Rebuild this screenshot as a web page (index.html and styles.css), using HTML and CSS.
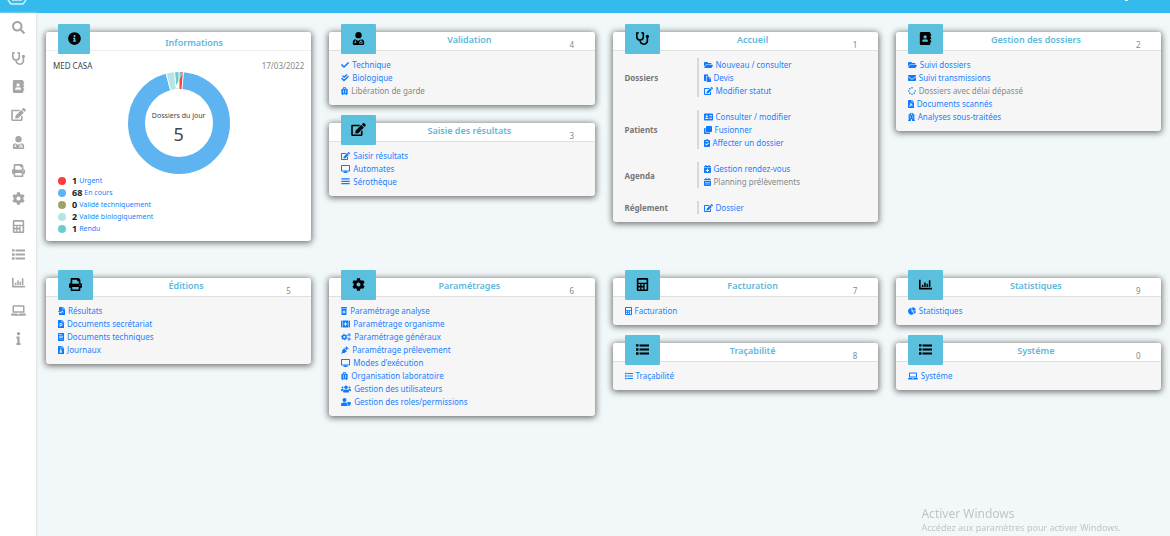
FILE: index.html
```html
<!DOCTYPE html>
<html lang="fr">
<head>
<meta charset="utf-8">
<title>MED CASA</title>
<link rel="stylesheet" href="styles.css">
</head>
<body>
<svg class="sprite" aria-hidden="true">
  <symbol id="search" viewBox="0 0 512 512"><path d="M505 442.7L405.3 343c-4.5-4.5-10.6-7-17-7H372c27.6-35.3 44-79.7 44-128C416 93.1 322.9 0 208 0S0 93.1 0 208s93.1 208 208 208c48.3 0 92.7-16.4 128-44v16.3c0 6.4 2.5 12.5 7 17l99.7 99.7c9.4 9.4 24.6 9.4 33.9 0l28.3-28.3c9.4-9.4 9.4-24.6.1-34zM208 336c-70.7 0-128-57.2-128-128 0-70.7 57.2-128 128-128 70.7 0 128 57.2 128 128 0 70.7-57.2 128-128 128z"/></symbol>
  <symbol id="stethoscope" viewBox="0 0 512 512"><path d="M447.1 112c-34.2.5-62.3 28.4-63 62.6-.5 24.3 12.5 45.6 32 56.8V344c0 57.3-50.2 104-112 104-60 0-109.2-44.1-111.9-99.2C265 333.8 320 269.2 320 192V36.6c0-11.4-8.1-21.3-19.3-23.5L237.8.5c-13-2.6-25.6 5.8-28.2 18.8L206.4 35c-2.6 13 5.8 25.6 18.8 28.2l30.7 6.1v121.4c0 52.9-42.2 96.7-95.1 97.2-53.4.5-96.9-42.7-96.9-96V69.4l30.7-6.1c13-2.6 21.4-15.2 18.8-28.2l-3.1-15.7C107.7 6.4 95.1-2 82.1.6L19.3 13C8.1 15.3 0 25.1 0 36.6V192c0 77.3 55.1 142 128.1 156.8C130.7 439.2 208.6 512 304 512c97 0 176-75.4 176-168V231.4c19.1-11.1 32-31.7 32-55.4 0-35.7-29.2-64.5-64.9-64z"/></symbol>
  <symbol id="book" viewBox="0 0 448 512"><path fill-rule="evenodd" d="M48 0h320q48 0 48 48v32h20q12 0 12 12v40q0 12-12 12h-20v64h20q12 0 12 12v40q0 12-12 12h-20v64h20q12 0 12 12v40q0 12-12 12h-20v64q0 48-48 48H48q-48 0-48-48V48Q0 0 48 0zM208 128a64 64 0 1 0 0 128a64 64 0 1 0 0-128zM96 384h224v-32q0-66-67-66-20 10-45 10t-45-10q-67 0-67 66z"/></symbol>
  <symbol id="edit" viewBox="0 0 576 512"><path d="M402.6 83.2l90.2 90.2c3.8 3.8 3.8 10 0 13.8L274.4 405.6l-92.8 10.3c-12.4 1.4-22.9-9.1-21.5-21.5l10.3-92.8L388.8 83.2c3.8-3.8 10-3.8 13.8 0zm162-22.9l-48.8-48.8c-15.2-15.2-39.9-15.2-55.2 0l-35.4 35.4c-3.8 3.8-3.8 10 0 13.8l90.2 90.2c3.8 3.8 10 3.8 13.8 0l35.4-35.4c15.2-15.3 15.2-40 0-55.2zM384 346.2V448H64V128h229.8c3.2 0 6.2-1.3 8.5-3.5l40-40c7.6-7.6 2.2-20.5-8.5-20.5H48C21.5 64 0 85.5 0 112v352c0 26.5 21.5 48 48 48h352c26.5 0 48-21.5 48-48V306.2c0-10.7-12.9-16-20.5-8.5l-40 40c-2.2 2.3-3.5 5.3-3.5 8.5z"/></symbol>
  <symbol id="doctor" viewBox="0 0 448 512"><circle cx="224" cy="125" r="125"/><path fill-rule="evenodd" d="M112 290q-112 14-112 130v44q0 48 48 48h352q48 0 48-48v-44q0-116-112-130v65q48 10 48 60v40q0 12-12 12h-40v-32h14v-22q0-28-26-28t-26 28v22h14v32h-40q-12 0-12-12v-40q0-50 48-60v-65l-80 50h-32l-80-50v80a38 38 0 1 1-32 0zM128 387a20 20 0 1 0 0 40a20 20 0 1 0 0-40z"/></symbol>
  <symbol id="print" viewBox="0 0 512 512"><path d="M448 192V77.25c0-8.49-3.37-16.62-9.37-22.63L393.37 9.37c-6-6-14.14-9.37-22.63-9.37H96C78.33 0 64 14.33 64 32v160c-35.35 0-64 28.65-64 64v112c0 8.84 7.16 16 16 16h48v96c0 17.67 14.33 32 32 32h320c17.67 0 32-14.33 32-32v-96h48c8.84 0 16-7.16 16-16V256c0-35.35-28.65-64-64-64zm-64 256H128v-96h256v96zm0-224H128V64h192v48c0 8.84 7.16 16 16 16h48v96zm48 72c-13.25 0-24-10.75-24-24 0-13.26 10.75-24 24-24s24 10.74 24 24c0 13.25-10.75 24-24 24z"/></symbol>
  <symbol id="cog" viewBox="0 0 512 512"><path d="M487.4 315.7l-42.6-24.6c4.3-23.2 4.3-47 0-70.2l42.6-24.6c4.9-2.8 7.1-8.6 5.5-14-11.1-35.6-30-67.8-54.7-94.6-3.8-4.1-10-5.1-14.8-2.3L380.8 110c-17.9-15.4-38.5-27.3-60.8-35.1V25.8c0-5.6-3.9-10.5-9.4-11.7-36.7-8.2-74.3-7.8-109.2 0-5.5 1.2-9.4 6.1-9.4 11.7V75c-22.2 7.9-42.8 19.8-60.8 35.1L88.7 85.5c-4.9-2.8-11-1.9-14.8 2.3-24.7 26.7-43.6 58.9-54.7 94.6-1.7 5.4.6 11.2 5.5 14L67.3 221c-4.3 23.2-4.3 47 0 70.2l-42.6 24.6c-4.9 2.8-7.1 8.6-5.5 14 11.1 35.6 30 67.8 54.7 94.6 3.8 4.1 10 5.1 14.8 2.3l42.6-24.6c17.9 15.4 38.5 27.3 60.8 35.1v49.2c0 5.6 3.9 10.5 9.4 11.7 36.7 8.2 74.3 7.8 109.2 0 5.5-1.2 9.4-6.1 9.4-11.7v-49.2c22.2-7.9 42.8-19.8 60.8-35.1l42.6 24.6c4.9 2.8 11 1.9 14.8-2.3 24.7-26.7 43.6-58.9 54.7-94.6 1.5-5.5-.7-11.3-5.6-14.1zM256 336c-44.1 0-80-35.9-80-80s35.9-80 80-80 80 35.9 80 80-35.9 80-80 80z"/></symbol>
  <symbol id="calc" viewBox="0 0 448 512"><path fill-rule="evenodd" d="M48 0h352q48 0 48 48v416q0 48-48 48H48q-48 0-48-48V48Q0 0 48 0zM64 64v120h320V64zM64 240v64h70v-64zM186 240v64h70v-64zM308 240v208h76V240zM64 372v76h70v-76zM186 372v76h70v-76z"/></symbol>
  <symbol id="list" viewBox="0 0 512 512"><path d="M0 46h100v96H0zM0 206h100v96H0zM0 366h100v96H0zM140 58h372v76H140zM140 218h372v76H140zM140 378h372v76H140z"/></symbol>
  <symbol id="chart" viewBox="0 0 512 512"><path d="M0 64h64v320h448v64H24q-24 0-24-24zM112 262h62v90h-62zM204 182h62v170h-62zM296 222h62v130h-62zM388 92h62v260h-62z"/></symbol>
  <symbol id="laptop" viewBox="0 0 640 512"><path fill-rule="evenodd" d="M112 32h416q48 0 48 48v272H64V80q0-48 48-48zM128 96v192h384V96zM0 384h260q4 32 34 32h52q30 0 34-32h260v32q0 64-64 64H64q-64 0-64-64z"/></symbol>
  <symbol id="info" viewBox="0 0 192 512"><circle cx="96" cy="66" r="66"/><path d="M12 180h128v252h40v80H12v-80h36V260H12z"/></symbol>
  <symbol id="infocircle" viewBox="0 0 512 512"><path d="M256 8C119 8 8 119 8 256s111 248 248 248 248-111 248-248S393 8 256 8zm0 110c23.2 0 42 18.8 42 42s-18.8 42-42 42-42-18.8-42-42 18.8-42 42-42zm56 254c0 6.600-5.400 12-12 12h-88c-6.600 0-12-5.400-12-12v-24c0-6.600 5.400-12 12-12h12v-64h-12c-6.600 0-12-5.400-12-12v-24c0-6.600 5.400-12 12-12h64c6.600 0 12 5.400 12 12v100h12c6.600 0 12 5.400 12 12v24z"/></symbol>
  <symbol id="check" viewBox="0 0 512 512"><path d="M173.9 439.4l-166.4-166.4c-10-10-10-26.2 0-36.2l36.2-36.2c10-10 26.2-10 36.2 0L192 312.7 432.1 72.6c10-10 26.2-10 36.2 0l36.2 36.2c10 10 10 26.2 0 36.2l-294.4 294.4c-10 10-26.2 10-36.2 0z"/></symbol>
  <symbol id="checks" viewBox="0 0 512 512"><path fill="none" stroke="currentColor" stroke-width="92" d="M100 110l100 90L380 40M30 260l160 160L480 150"/></symbol>
  <symbol id="luggage" viewBox="0 0 400 512"><path fill-rule="evenodd" d="M110 110V40q0-40 40-40h100q40 0 40 40v70h60q50 0 50 50v270q0 40-40 40v42h-70v-42H110v42H40v-42q-40 0-40-40V160q0-50 50-50zM160 110h80V50h-80zM100 180v220h44V180zM256 180v220h44V180z"/></symbol>
  <symbol id="desktop" viewBox="0 0 576 512"><path fill-rule="evenodd" d="M48 0h480q48 0 48 48v320q0 48-48 48H350l16 48h56v48H154v-48h56l16-48H48q-48 0-48-48V48Q0 0 48 0zM64 64v284h448V64z"/></symbol>
  <symbol id="bars" viewBox="0 0 576 512"><path d="M20 20h536v80H20zM20 170h536v80H20zM20 320h536v80H20z"/></symbol>
  <symbol id="folder" viewBox="0 0 576 512"><path d="M572.694 292.093L500.27 416.248A63.997 63.997 0 0 1 444.989 448H45.025c-18.523 0-30.064-20.093-20.731-36.093l72.424-124.155A64 64 0 0 1 152 256h399.964c18.523 0 30.064 20.093 20.73 36.093zM152 224h328v-48c0-26.51-21.49-48-48-48H272l-64-64H48C21.49 64 0 85.49 0 112v278.046l69.077-118.418C86.214 242.25 117.989 224 152 224z"/></symbol>
  <symbol id="paste" viewBox="0 0 448 512"><path d="M0 30h100q28-50 56 0h100v90H130v320H0zM170 160h150v120h128v232H170zM350 160l98 90h-98z"/></symbol>
  <symbol id="idcard" viewBox="0 0 576 512"><path fill-rule="evenodd" d="M48 32h480q48 0 48 48v352q0 48-48 48H48q-48 0-48-48V80q0-48 48-48zM176 140a66 66 0 1 0 0 132a66 66 0 1 0 0-132zM64 390h224q0-90-70-90h-84q-70 0-70 90zM350 150v44h162v-44zM350 234v44h162v-44zM350 318v44h162v-44z"/></symbol>
  <symbol id="clone" viewBox="0 0 512 512"><path d="M176 0h288q48 0 48 48v288q0 48-48 48H176q-48 0-48-48V48q0-48 48-48zM96 120v296h296v48q0 48-48 48H48q-48 0-48-48V168q0-48 48-48z"/></symbol>
  <symbol id="clipcheck" viewBox="0 0 384 512"><path fill-rule="evenodd" d="M48 64h80q10-64 64-64t64 64h80q48 0 48 48v352q0 48-48 48H48q-48 0-48-48V112q0-48 48-48zM110 130v40h164v-40zM70 320l100 100 150-150-42-42-108 108-58-58z"/></symbol>
  <symbol id="calplus" viewBox="0 0 448 512"><path fill-rule="evenodd" d="M0 160V112q0-48 48-48h48V0h76v64h104V0h76v64h48q48 0 48 48v48zM0 192h448v272q0 48-48 48H48q-48 0-48-48zM192 240v72h-72v64h72v72h64v-72h72v-64h-72v-72z"/></symbol>
  <symbol id="calendar" viewBox="0 0 448 512"><path fill-rule="evenodd" d="M0 150V112q0-48 48-48h48V0h76v64h104V0h76v64h48q48 0 48 48v38zM0 192h448v272q0 48-48 48H48q-48 0-48-48zM64 260v34h320v-34zM64 370v34h320v-34z"/></symbol>
  <symbol id="mail" viewBox="0 0 512 512"><path d="M48 64h416q48 0 48 48v26L256 320 0 138v-26q0-48 48-48zM0 190l256 182 256-182v210q0 48-48 48H48q-48 0-48-48z"/></symbol>
  <symbol id="spinner" viewBox="0 0 512 512"><circle cx="256" cy="52" r="52"/><circle cx="111" cy="111" r="52"/><circle cx="52" cy="256" r="52"/><circle cx="111" cy="401" r="52"/><circle cx="256" cy="460" r="52"/><circle cx="401" cy="401" r="52"/><circle cx="460" cy="256" r="52"/></symbol>
  <symbol id="pdf" viewBox="0 0 384 512"><path fill-rule="evenodd" d="M24 0h210v150h150v338q0 24-24 24H24q-24 0-24-24V24Q0 0 24 0zM266 0l118 118H266zM160 190q10 120-90 230l36 20q50-90 180-80l30-40q-90 0-110-130z"/></symbol>
  <symbol id="hospital" viewBox="0 0 448 512"><path fill-rule="evenodd" d="M120 80V0h208v80h80v390h40v42H260V400h-72v112H0v-42h40V80zM204 30v30h-30v36h30v30h40V96h30V60h-30V30zM110 180v50h70v-50zM268 180v50h70v-50zM110 290v50h70v-50zM268 290v50h70v-50z"/></symbol>
  <symbol id="filewave" viewBox="0 0 448 512"><path fill-rule="evenodd" d="M88 0h210v150h150v338q0 24-24 24H88q-24 0-24-24V350h80l50 80 76-150 30 70h60v-44h-34l-56-100-76 150-30-50H0v-56h64V24Q64 0 88 0zM330 0l118 118H330z"/></symbol>
  <symbol id="file" viewBox="0 0 384 512"><path fill-rule="evenodd" d="M24 0h210v150h150v338q0 24-24 24H24q-24 0-24-24V24Q0 0 24 0zM266 0l118 118H266zM100 210v220h54v-70h60q76 0 76-75t-76-75zM154 256h50q30 0 30 30t-30 30h-50z"/></symbol>
  <symbol id="filetext" viewBox="0 0 384 512"><path fill-rule="evenodd" d="M24 0h336q24 0 24 24v464q0 24-24 24H24q-24 0-24-24V24Q0 0 24 0zM80 80v44h140V80zM80 180v120h224V180zM120 220h144v40H120zM80 360v36h110v-36zM230 400v36h90v-36z"/></symbol>
  <symbol id="filezip" viewBox="0 0 384 512"><path fill-rule="evenodd" d="M24 0h210v150h150v338q0 24-24 24H24q-24 0-24-24V24Q0 0 24 0zM266 0l118 118H266zM110 50v46h50V50zM150 120v46h50v-46zM150 210l-50 170q0 70 75 70t75-70l-50-170zM175 350a30 26 0 1 1 0 52a30 26 0 1 1 0-52z"/></symbol>
  <symbol id="bottle" viewBox="0 0 384 512"><path fill-rule="evenodd" d="M24 0h336q24 0 24 24v72H0V24Q0 0 24 0zM32 128h320v336q0 48-48 48H80q-48 0-48-48zM160 220v64H96v64h64v64h64v-64h64v-64h-64v-64z"/></symbol>
  <symbol id="kit" viewBox="0 0 576 512"><path fill-rule="evenodd" d="M0 80q0-48 48-48h32v448H48q-48 0-48-48zM112 32h352v448H112zM496 32h32q48 0 48 48v352q0 48-48 48h-32zM256 140v84h-84v64h84v84h64v-84h84v-64h-84v-84z"/></symbol>
  <symbol id="cogs" viewBox="0 0 640 512"><g fill="none" stroke="currentColor"><circle cx="210" cy="256" r="116" stroke-width="96"/><circle cx="210" cy="256" r="180" stroke-width="54" stroke-dasharray="94 94"/><circle cx="515" cy="120" r="56" stroke-width="54"/><circle cx="515" cy="120" r="92" stroke-width="38" stroke-dasharray="48 48"/><circle cx="515" cy="392" r="56" stroke-width="54"/><circle cx="515" cy="392" r="92" stroke-width="38" stroke-dasharray="48 48"/></g></symbol>
  <symbol id="syringe" viewBox="0 0 512 512"><path d="M350 20l142 142-40 40-40-40-34 34 40 40-40 40L220 118l40-40 50 46 40-36-40-28zM200 150l180 180-160 110-100 0-70 62-40-40 62-70V290z"/></symbol>
  <symbol id="users" viewBox="0 0 640 512"><circle cx="96" cy="160" r="64"/><circle cx="544" cy="160" r="64"/><circle cx="320" cy="144" r="112"/><path d="M64 256h64q30 0 46 20-56 32-64 108H0v-64q0-64 64-64zM576 256h-64q-30 0-46 20 56 32 64 108h110v-64q0-64-64-64zM243 288h154q115 0 115 115v29q0 48-48 48H176q-48 0-48-48v-29q0-115 115-115z"/></symbol>
  <symbol id="usershield" viewBox="0 0 640 512"><circle cx="224" cy="128" r="128"/><path d="M134 288h180q30 0 60 14v90q0 70 80 120H48q-48 0-48-48v-42q0-134 134-134zM510 240l130 52q0 160-130 220-120-60-120-220z"/></symbol>
  <symbol id="pie" viewBox="0 0 544 512"><path d="M240 40v240l165 165A236 236 0 1 1 240 40zM288 0a236 236 0 0 1 240 224H288zM304 270h236q-6 96-70 166z"/></symbol>
</svg>

<header class="topbar">
  <svg class="logo" viewBox="0 0 20 5" aria-hidden="true"><path d="M1 0l3 4h12l3-4M5 0h10" fill="none" stroke="#d6f1fb" stroke-width="1.500"/></svg>
  <span class="caret"></span>
</header>

<div class="shell">
  <nav class="sidebar" aria-label="Menu">
    <a href="#" aria-label="Recherche"><svg><use href="#search"/></svg></a>
    <a href="#" aria-label="Accueil"><svg><use href="#stethoscope"/></svg></a>
    <a href="#" aria-label="Gestion des dossiers"><svg><use href="#book"/></svg></a>
    <a href="#" aria-label="Saisie des résultats"><svg class="wide"><use href="#edit"/></svg></a>
    <a href="#" aria-label="Validation"><svg><use href="#doctor"/></svg></a>
    <a href="#" aria-label="Éditions"><svg><use href="#print"/></svg></a>
    <a href="#" aria-label="Paramétrages"><svg><use href="#cog"/></svg></a>
    <a href="#" aria-label="Facturation"><svg><use href="#calc"/></svg></a>
    <a href="#" aria-label="Traçabilité"><svg><use href="#list"/></svg></a>
    <a href="#" aria-label="Statistiques"><svg><use href="#chart"/></svg></a>
    <a href="#" aria-label="Système"><svg class="wide"><use href="#laptop"/></svg></a>
    <a href="#" aria-label="Informations"><svg><use href="#info"/></svg></a>
  </nav>

  <main class="board">
    <div class="stack">
      <section class="card info">
        <div class="head"><span class="tile"><svg><use href="#infocircle"/></svg></span><h2>Informations</h2></div>
        <div class="summary">
          <div class="meta"><span>MED CASA</span><time>17/03/2022</time></div>
          <div class="chart">
            <svg viewBox="-51 -51 102 102" role="img" aria-label="Répartition des dossiers">
              <g fill="none" stroke-width="17" transform="rotate(-90)">
                <circle r="42.5" pathLength="72" stroke="#ff3b3b" stroke-dasharray="1 71"/>
                <circle r="42.5" pathLength="72" stroke="#5eb4f0" stroke-dasharray="68 4" stroke-dashoffset="-1"/>
                <circle r="42.5" pathLength="72" stroke="#b5e6e4" stroke-dasharray="2 70" stroke-dashoffset="-69"/>
                <circle r="42.5" pathLength="72" stroke="#6ecbcb" stroke-dasharray="1 71" stroke-dashoffset="-71"/>
              </g>
              <path d="M0-33V-52M2.900-33L4.500-52M-8.500-33L-13.400-52M-2.900-33L-4.500-52" stroke="#fff"/>
            </svg>
            <div class="total"><span>Dossiers du jour</span><strong>5</strong></div>
          </div>
          <ul class="legend">
            <li><i class="dot red"></i><b>1</b> <a href="#">Urgent</a></li>
            <li><i class="dot blue"></i><b>68</b> <a href="#">En cours</a></li>
            <li><i class="dot olive"></i><b>0</b> <a href="#">Validé techniquement</a></li>
            <li><i class="dot pale"></i><b>2</b> <a href="#">Validé biologiquement</a></li>
            <li><i class="dot teal"></i><b>1</b> <a href="#">Rendu</a></li>
          </ul>
        </div>
      </section>
    </div>

    <div class="stack">
      <section class="card">
        <div class="head"><span class="tile"><svg><use href="#doctor"/></svg></span><h2>Validation</h2><span class="num">4</span></div>
        <ul class="links">
          <li><a href="#"><svg class="w8"><use href="#check"/></svg>Technique</a></li>
          <li><a href="#"><svg class="w8"><use href="#checks"/></svg>Biologique</a></li>
          <li><a href="#" class="off"><svg class="w7"><use href="#luggage"/></svg>Libération de garde</a></li>
        </ul>
      </section>
      <section class="card">
        <div class="head"><span class="tile"><svg class="wide"><use href="#edit"/></svg></span><h2>Saisie des résultats</h2><span class="num">3</span></div>
        <ul class="links">
          <li><a href="#"><svg class="w9"><use href="#edit"/></svg>Saisir résultats</a></li>
          <li><a href="#"><svg class="w9"><use href="#desktop"/></svg>Automates</a></li>
          <li><a href="#"><svg class="w9"><use href="#bars"/></svg>Sérothèque</a></li>
        </ul>
      </section>
    </div>

    <div class="stack">
      <section class="card">
        <div class="head"><span class="tile"><svg><use href="#stethoscope"/></svg></span><h2>Accueil</h2><span class="num">1</span></div>
        <div class="groups">
          <h3>Dossiers</h3>
          <ul>
            <li><a href="#"><svg class="w9"><use href="#folder"/></svg>Nouveau / consulter</a></li>
            <li><a href="#"><svg class="w7"><use href="#paste"/></svg>Devis</a></li>
            <li><a href="#"><svg class="w9"><use href="#edit"/></svg>Modifier statut</a></li>
          </ul>
          <h3>Patients</h3>
          <ul>
            <li><a href="#"><svg class="w9"><use href="#idcard"/></svg>Consulter / modifier</a></li>
            <li><a href="#"><svg class="w8"><use href="#clone"/></svg>Fusionner</a></li>
            <li><a href="#"><svg class="w6"><use href="#clipcheck"/></svg>Affecter un dossier</a></li>
          </ul>
          <h3>Agenda</h3>
          <ul>
            <li><a href="#"><svg class="w7"><use href="#calplus"/></svg>Gestion rendez-vous</a></li>
            <li><a href="#" class="off"><svg class="w7"><use href="#calendar"/></svg>Planning prélèvements</a></li>
          </ul>
          <h3>Réglement</h3>
          <ul>
            <li><a href="#"><svg class="w9"><use href="#edit"/></svg>Dossier</a></li>
          </ul>
        </div>
      </section>
    </div>

    <div class="stack">
      <section class="card">
        <div class="head"><span class="tile"><svg><use href="#book"/></svg></span><h2>Gestion des dossiers</h2><span class="num">2</span></div>
        <ul class="links">
          <li><a href="#"><svg class="w9"><use href="#folder"/></svg>Suivi dossiers</a></li>
          <li><a href="#"><svg class="w8"><use href="#mail"/></svg>Suivi transmissions</a></li>
          <li><a href="#" class="off"><svg class="w8"><use href="#spinner"/></svg>Dossiers avec délai dépassé</a></li>
          <li><a href="#"><svg class="w6"><use href="#pdf"/></svg>Documents scannés</a></li>
          <li><a href="#"><svg class="w7"><use href="#hospital"/></svg>Analyses sous-traitées</a></li>
        </ul>
      </section>
    </div>

    <div class="stack">
      <section class="card">
        <div class="head"><span class="tile"><svg><use href="#print"/></svg></span><h2>Éditions</h2><span class="num">5</span></div>
        <ul class="links">
          <li><a href="#"><svg class="w7"><use href="#filewave"/></svg>Résultats</a></li>
          <li><a href="#"><svg class="w6"><use href="#file"/></svg>Documents secrétariat</a></li>
          <li><a href="#"><svg class="w6"><use href="#filetext"/></svg>Documents techniques</a></li>
          <li><a href="#"><svg class="w6"><use href="#filezip"/></svg>Journaux</a></li>
        </ul>
      </section>
    </div>

    <div class="stack">
      <section class="card">
        <div class="head"><span class="tile"><svg><use href="#cog"/></svg></span><h2>Paramétrages</h2><span class="num">6</span></div>
        <ul class="links">
          <li><a href="#"><svg class="w6"><use href="#bottle"/></svg>Paramétrage analyse</a></li>
          <li><a href="#"><svg class="w9"><use href="#kit"/></svg>Paramétrage organisme</a></li>
          <li><a href="#"><svg class="w10"><use href="#cogs"/></svg>Paramétrage généraux</a></li>
          <li><a href="#"><svg class="w8"><use href="#syringe"/></svg>Paramétrage prélevement</a></li>
          <li><a href="#"><svg class="w9"><use href="#desktop"/></svg>Modes d'exécution</a></li>
          <li><a href="#"><svg class="w7"><use href="#luggage"/></svg>Organisation laboratoire</a></li>
          <li><a href="#"><svg class="w10"><use href="#users"/></svg>Gestion des utilisateurs</a></li>
          <li><a href="#"><svg class="w10"><use href="#usershield"/></svg>Gestion des roles/permissions</a></li>
        </ul>
      </section>
    </div>

    <div class="stack">
      <section class="card">
        <div class="head"><span class="tile"><svg><use href="#calc"/></svg></span><h2>Facturation</h2><span class="num">7</span></div>
        <ul class="links"><li><a href="#"><svg class="w7"><use href="#calc"/></svg>Facturation</a></li></ul>
      </section>
      <section class="card">
        <div class="head"><span class="tile"><svg><use href="#list"/></svg></span><h2>Traçabilité</h2><span class="num">8</span></div>
        <ul class="links"><li><a href="#"><svg class="w8"><use href="#list"/></svg>Traçabilité</a></li></ul>
      </section>
    </div>

    <div class="stack">
      <section class="card">
        <div class="head"><span class="tile"><svg><use href="#chart"/></svg></span><h2>Statistiques</h2><span class="num">9</span></div>
        <ul class="links"><li><a href="#"><svg class="w8"><use href="#pie"/></svg>Statistiques</a></li></ul>
      </section>
      <section class="card">
        <div class="head"><span class="tile"><svg><use href="#list"/></svg></span><h2>Systéme</h2><span class="num">0</span></div>
        <ul class="links"><li><a href="#"><svg class="w10"><use href="#laptop"/></svg>Systéme</a></li></ul>
      </section>
    </div>
  </main>
</div>

<aside class="watermark"><p>Activer Windows</p><small>Accédez aux paramètres pour activer Windows.</small></aside>
</body>
</html>
```
FILE: styles.css
```css
* { box-sizing: border-box; }

body {
  margin: 0;
  min-height: 100vh;
  display: flex;
  flex-direction: column;
  background: #f2f8f9;
  color: #444;
  font: 8px/13px "Noto Sans", "Open Sans", sans-serif;
}

h2, h3, p, ul { margin: 0; padding: 0; }
ul { list-style: none; }
a { color: #1a80ff; text-decoration: none; }
svg { fill: currentColor; }
.sprite { position: absolute; width: 0; height: 0; }

.topbar {
  display: flex;
  align-items: flex-start;
  justify-content: space-between;
  height: 13px;
  padding: 0 42px 0 7px;
  background: #33bbed;
  overflow: hidden;
}
.logo { width: 20px; height: 5px; }
.caret { width: 3px; height: 1px; background: #fff; }

.shell { display: flex; flex: 1; }

.sidebar {
  display: flex;
  flex-direction: column;
  width: 37px;
  flex: none;
  background: #fff;
  border-right: 1px solid #e4e8e9;
  box-shadow: 0 0 2px #dde3e5;
}
.sidebar a {
  display: flex;
  align-items: center;
  justify-content: center;
  height: 28px;
  color: #a6a6a6;
}
.sidebar a:first-child { margin-bottom: 3px; }
.sidebar svg { width: 13px; height: 13px; }
.sidebar .wide { width: 15px; }

.board {
  flex: 1;
  display: grid;
  grid-template-columns: repeat(4, minmax(0, 1fr));
  align-content: start;
  gap: 37px 18px;
  padding: 19px 9px;
}
.stack { display: flex; flex-direction: column; gap: 18px; }

.card {
  background: #f6f6f6;
  border-radius: 3px;
  box-shadow: 0 1px 6px 1px rgba(0, 0, 0, .55);
}
.head {
  display: flex;
  height: 19px;
  background: #fff;
  border-bottom: 1px solid #e0e0e0;
  border-radius: 3px 3px 0 0;
}
.tile {
  display: flex;
  align-items: center;
  justify-content: center;
  width: 35px;
  height: 30px;
  margin: -8px 0 0 12px;
  padding-bottom: 2px;
  background: #5bc0de;
  border-radius: 1px;
  color: #000;
  z-index: 1;
}
.tile svg { width: 13px; height: 13px; }
.tile .wide { width: 15px; }
.head h2 {
  flex: 1;
  text-align: center;
  color: #5cb8dc;
  font-size: 9px;
  font-weight: 600;
  line-height: 16px;
}
.num { width: 32px; padding: 6px 0 0 7px; color: #888; }

.info { background: #fff; }
.info .tile { width: 32px; }
.info .head { padding-right: 13px; border-color: #eee; }
.info h2 { line-height: 21px; }

.links { padding: 7px 12px 8px; }
li a { display: flex; align-items: center; gap: 3px; }
li svg { flex: none; height: 8px; color: #0d7bff; }
.off { color: #888; }
.w6 { width: 6px; }
.w7 { width: 7px; }
.w8 { width: 8px; }
.w9 { width: 9px; }
.w10 { width: 10px; }

.groups {
  display: grid;
  grid-template-columns: 72px 1fr;
  row-gap: 13px;
  align-items: center;
  padding: 7px 12px 8px;
}
.groups h3 { color: #777; font-size: 8px; font-weight: 700; }
.groups ul { border-left: 2px solid #d8d8d8; padding-left: 5px; }

.summary { padding: 8px 7px 6px; }
.meta { display: flex; justify-content: space-between; }
.meta time { color: #888; }
.chart { display: grid; justify-items: center; align-items: center; }
.chart svg, .total { grid-area: 1 / 1; }
.chart svg { width: 102px; height: 102px; }
.total { display: flex; flex-direction: column; align-items: center; padding-top: 9px; font-size: 7px; }
.total strong { font-size: 18px; font-weight: 400; line-height: 25px; }
.legend { padding: 1px 5px 0; }
.legend li { display: flex; align-items: center; gap: 2px; line-height: 12px; }
.legend a { font-size: 7px; }
.legend b { font-size: 9px; color: #222; }
.dot { width: 8px; height: 8px; margin-right: 4px; border-radius: 50%; }
.red { background: #ff3b3b; }
.blue { background: #5eb4f0; }
.olive { background: #9ca566; }
.pale { background: #b5e6e4; }
.teal { background: #6ecbcb; }

.watermark {
  position: fixed;
  right: 49px;
  bottom: 2px;
  color: #bfc5c7;
}
.watermark p { font-size: 12px; line-height: 16px; }
.watermark small { font-size: 9px; line-height: 12px; display: block; }
```
